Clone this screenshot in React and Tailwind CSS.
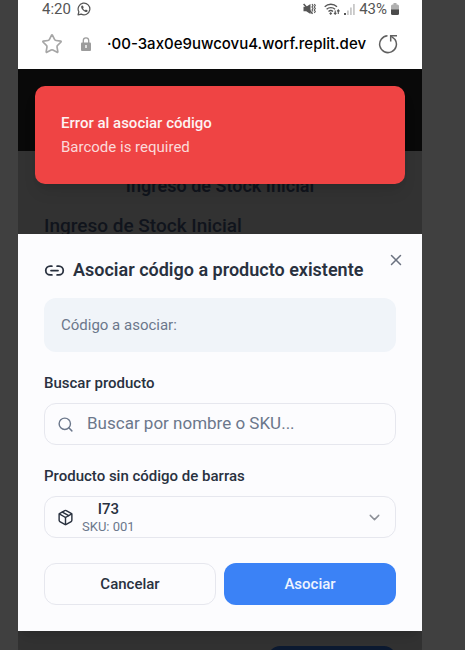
import { useState } from "react";
import { ChevronDown, Link2, Package, Search, Star, X } from "lucide-react";

function WhatsAppIcon() {
  return (
    <svg viewBox="0 0 16 16" className="size-[14px]" fill="none" stroke="currentColor" strokeWidth="1.4" aria-hidden="true">
      <path d="M1.2 14.8l.9-3.600A6.700 6.700 0 1 1 4.800 13.900z" strokeLinejoin="round" />
      <path d="M5.300 4.200c-1.200 1-.5 3.100 1.500 5.100s4.100 2.700 5.100 1.500l.3-1-2-1.200-1 .8c-.9-.3-2-1.400-2.300-2.300l.8-1-1.200-2.200z" fill="currentColor" stroke="none" />
    </svg>
  );
}

function MutedIcon() {
  return (
    <svg viewBox="0 0 13 12" className="h-3 w-[13px]" fill="none" stroke="currentColor" aria-hidden="true">
      <path d="M0.500 3.800h2.700L7.500 1v10L3.200 8.200H0.500z" fill="currentColor" stroke="none" />
      <path d="M0.600 1l9 9.800" strokeWidth="1.500" />
      <path d="M9 1l1 1.500-1 1.500 1 1.500-1 1.500 1 1.500M11.300 1l1 1.500-1 1.500 1 1.500-1 1.500 1 1.500-1 1.500" strokeWidth="1.100" />
    </svg>
  );
}

function WifiIcon() {
  return (
    <svg viewBox="0 0 16 12" className="h-3 w-4" fill="none" stroke="currentColor" strokeWidth="1.300" aria-hidden="true">
      <path d="M0.700 3.700a9 9 0 0 1 12.300 0M2.600 6.200a6.300 6.300 0 0 1 8.500 0M4.500 8.500a3.400 3.400 0 0 1 4.500 0" />
      <path d="M6.700 9l1.500 1.500-1.500 1.500-1.500-1.500z" fill="currentColor" stroke="none" />
      <path d="M11.200 7.500V11M10 9.800l1.200 1.400 1.200-1.400M14.300 11V7M13.100 8.300l1.200-1.500 1.200 1.500" strokeWidth="1.100" />
    </svg>
  );
}

function SignalIcon() {
  return (
    <svg viewBox="0 0 11 11" className="size-[11px]" aria-hidden="true">
      <path d="M0 9h2v2H0z" fill="#555555" />
      <path d="M3 6.500h1.800V11H3zM6 3.500h1.800V11H6zM9 0h1.800v11H9z" fill="#c9c9c9" />
    </svg>
  );
}

function BatteryIcon() {
  return (
    <svg viewBox="0 0 8 12" className="h-3 w-2" aria-hidden="true">
      <path d="M2.500 0h3v1.500h1A1.500 1.500 0 0 1 8 3v4H0V3a1.500 1.500 0 0 1 1.500-1.500h1z" fill="#b0b0b0" />
      <path d="M0 6.500h8v4A1.500 1.500 0 0 1 6.500 12h-5A1.500 1.500 0 0 1 0 10.500z" fill="#4b4b4b" />
    </svg>
  );
}

function LockIcon() {
  return (
    <svg viewBox="0 0 10 14" className="h-[14px] w-[10px]" fill="none" aria-hidden="true">
      <path d="M2.300 6V3.500a2.700 2.700 0 0 1 5.400 0V6" stroke="#9c9c9c" strokeWidth="1.300" />
      <rect y="5.500" width="10" height="8.500" rx="1" fill="#9c9c9c" />
      <path d="M5 8v3" stroke="#ffffff" strokeWidth="1.400" />
    </svg>
  );
}

function ReloadIcon() {
  return (
    <svg viewBox="0 0 20 20" className="size-5" fill="none" stroke="currentColor" strokeWidth="1.500" aria-hidden="true">
      <path d="M9.500 1.800A8.400 8.400 0 1 0 17 5.500L13.200 2.200" />
      <path d="M19 1.700h-6.300v5.800" />
    </svg>
  );
}

function StarIcon() {
  return <Star className="size-[22px]" strokeWidth={1.800} strokeLinejoin="miter" />;
}

function BrowserBar() {
  return (
    <header className="h-[69px] bg-white">
      <div className="flex h-[18px] items-center justify-between pr-[23px] pl-6 font-[Roboto,sans-serif] text-[#555555]">
        <div className="flex items-center gap-[6px]">
          <span className="text-[15px] leading-[18px]">4:20</span>
          <WhatsAppIcon />
        </div>
        <div className="flex items-center gap-1">
          <MutedIcon />
          <span className="pl-1">
            <WifiIcon />
          </span>
          <SignalIcon />
          <span className="text-[15px] leading-[18px]">43%</span>
          <BatteryIcon />
        </div>
      </div>
      <div className="flex items-center pt-[15px] pr-6 pl-[23px]">
        <button type="button" aria-label="Favorito" className="text-[#a6a6a6]">
          <StarIcon />
        </button>
        <span className="pl-[18px]">
          <LockIcon />
        </span>
        <span className="min-w-0 flex-1 overflow-hidden pl-4 font-[Inter,sans-serif] text-[15px] leading-[22px] font-medium whitespace-nowrap text-black">
          ·00-3ax0e9uwcovu4.worf.replit.dev
        </span>
        <button type="button" aria-label="Recargar" className="text-[#606060]">
          <ReloadIcon />
        </button>
      </div>
    </header>
  );
}

function Toast() {
  return (
    <div
      role="alert"
      className="absolute inset-x-[17px] top-[86px] z-20 rounded-[10px] bg-[#ef4444] px-[26px] py-[25px] shadow-lg"
    >
      <p className="text-[15px] leading-6 font-medium text-[#fdf3f3]">Error al asociar código</p>
      <p className="text-[15px] leading-6 text-[#fbd9d9]">Barcode is required</p>
    </div>
  );
}

function AssociateDialog() {
  const [query, setQuery] = useState("");
  return (
    <form
      role="dialog"
      aria-labelledby="dialog-title"
      onSubmit={(event) => event.preventDefault()}
      className="absolute inset-x-0 top-[234px] z-10 bg-[#fcfcfe] px-[26px] pt-[25px] pb-[26px] text-[#29313f] shadow-lg"
    >
      <button type="button" aria-label="Cerrar" className="absolute top-[17px] right-[17px] text-[#6b7280]">
        <X className="size-[18px]" strokeWidth={2} />
      </button>
      <h2 id="dialog-title" className="flex items-center gap-2 text-[18px] leading-[22px] font-semibold">
        <Link2 className="size-[21px] shrink-0" />
        <span className="whitespace-nowrap">Asociar código a producto existente</span>
      </h2>
      <p className="mt-[17px] rounded-xl bg-[#f0f4f9] p-[17px] text-[15px] leading-5 text-[#6b778b]">Código a asociar:</p>
      <label htmlFor="search" className="mt-5 block text-[15px] leading-[22px] font-medium">
        Buscar producto
      </label>
      <div className="mt-[9px] flex h-[42px] items-center gap-[13px] rounded-xl border border-[#e6e7ee] px-3 text-[#6b778b]">
        <Search className="size-[17px] shrink-0" />
        <input
          id="search"
          value={query}
          onChange={(event) => setQuery(event.target.value)}
          placeholder="Buscar por nombre o SKU..."
          className="min-w-0 flex-1 bg-transparent text-[17px] outline-none placeholder:text-[#6b778b]"
        />
      </div>
      <label htmlFor="product" className="mt-5 block text-[15px] leading-[22px] font-medium">
        Producto sin código de barras
      </label>
      <div className="relative mt-[9px] flex h-[42px] items-center rounded-xl border border-[#e6e7ee] px-3">
        <Package className="size-[17px] shrink-0" />
        <div className="flex-1 pl-2">
          <div className="flex w-fit flex-col items-center">
            <span className="text-[15px] leading-5 font-medium">I73</span>
            <span className="text-[13px] leading-4 text-[#6b778b]">SKU: 001</span>
          </div>
        </div>
        <ChevronDown className="size-[17px] text-[#8d9097]" />
        <select id="product" className="absolute inset-0 size-full cursor-pointer opacity-0">
          <option>I73</option>
        </select>
      </div>
      <div className="mt-[25px] grid grid-cols-2 gap-2 text-[15px] font-medium">
        <button type="button" className="h-[42px] rounded-xl border border-[#e6e7ee]">
          Cancelar
        </button>
        <button type="submit" className="h-[42px] rounded-xl bg-[#3b82f6] text-[#eef4ff]">
          Asociar
        </button>
      </div>
    </form>
  );
}

export default function App() {
  return (
    <div className="h-screen overflow-hidden bg-[#404040] pr-[43px] pl-[18px] font-[Roboto,sans-serif]">
      <div className="relative flex h-full flex-col overflow-hidden bg-[#323232]">
        <BrowserBar />
        <div className="h-[82px] shrink-0 bg-[#090909]" />
        <main className="flex min-h-0 flex-1 flex-col px-[26px] pt-[23px] text-[#10141c]">
          <h1 className="text-center text-[18px] leading-6 font-semibold">Ingreso de Stock Inicial</h1>
          <h2 className="mt-4 text-[19px] leading-6 font-medium">Ingreso de Stock Inicial</h2>
          <button type="button" aria-label="Guardar" className="mt-[408px] h-[42px] w-32 shrink-0 self-end rounded-xl bg-[#0c1a31]" />
        </main>
        <Toast />
        <AssociateDialog />
      </div>
    </div>
  );
}
